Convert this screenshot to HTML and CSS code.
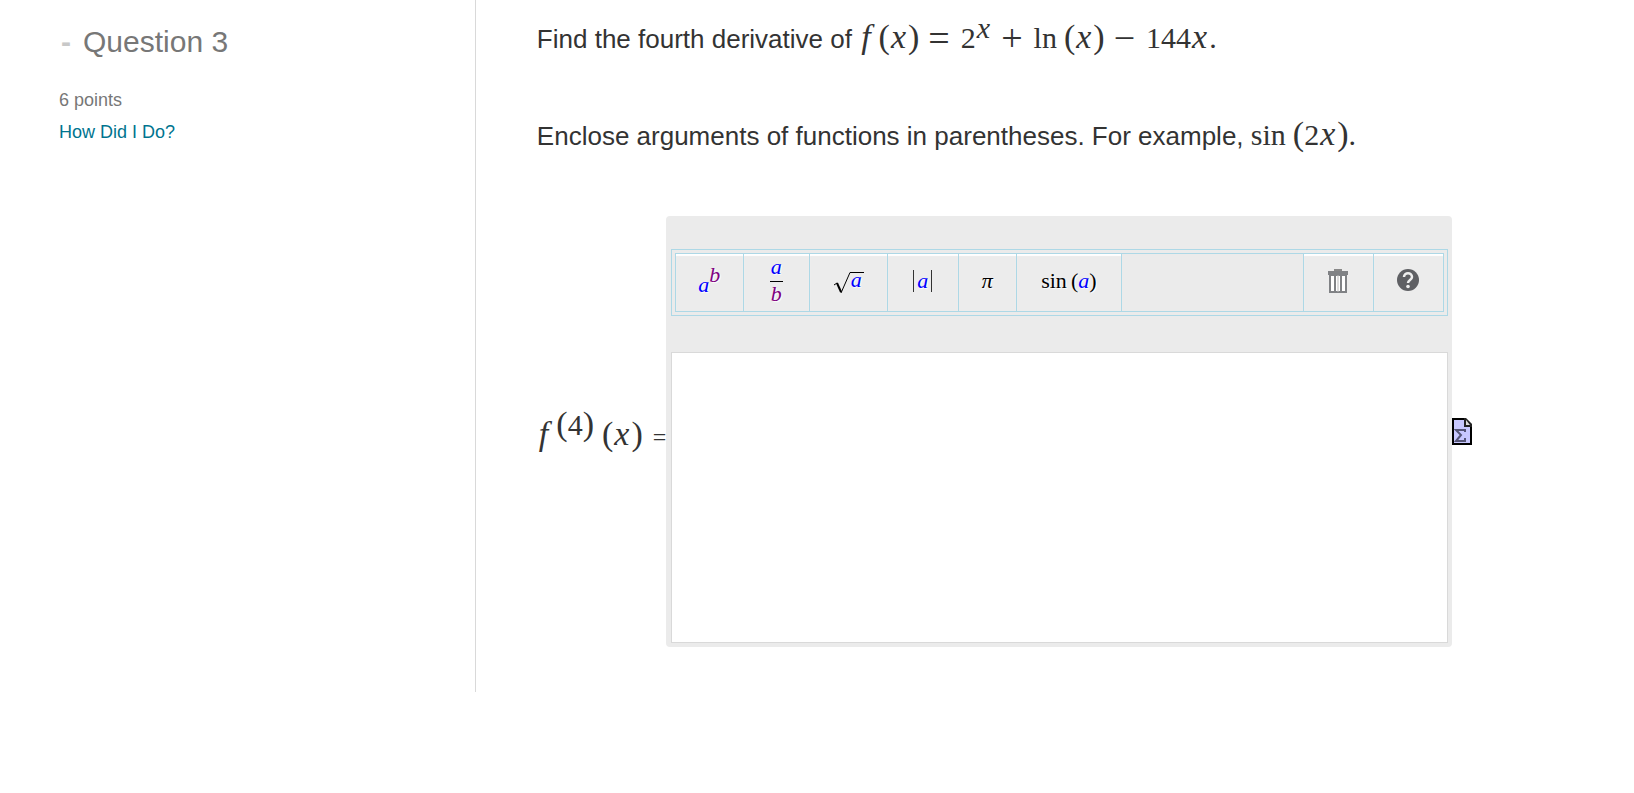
FILE: index.html
```html
<!DOCTYPE html>
<html lang="en">
<head>
    <meta charset="UTF-8">
    <meta name="viewport" content="width=device-width, initial-scale=1.0">
    <title>Question 3</title>
    <link rel="stylesheet" href="styles.css">
</head>
<body>
    <div class="question">
        <aside class="question-info">
            <h2><span class="dash">-</span>Question 3</h2>
            <p class="points">6 points</p>
            <a class="feedback-link" href="#">How Did I Do?</a>
        </aside>
        <main class="question-body">
            <p class="prompt">Find the fourth derivative of
                <span class="math"><i class="fn">f</i><span class="paren">(</span><i>x</i><span class="paren">)</span><span class="op">=</span>2<sup><i>x</i></sup><span class="op">+</span><span class="name">ln</span><span class="paren">(</span><i>x</i><span class="paren">)</span><span class="op">−</span>144<i>x</i>.</span>
            </p>
            <p class="prompt">Enclose arguments of functions in parentheses. For example,
                <span class="math"><span class="name">sin</span><span class="paren">(</span>2<i>x</i><span class="paren">)</span>.</span>
            </p>
            <div class="answer">
                <label class="math answer-label" for="answer"><i class="fn">f</i><sup><span class="paren">(</span>4<span class="paren">)</span></sup><span class="arg"><span class="paren">(</span><i>x</i><span class="paren">)</span></span><span class="equals">=</span></label>
                <div class="editor">
                    <div class="toolbar">
                        <div class="tools">
                            <button type="button" class="tool power" aria-label="Exponent"><i class="a">a</i><sup class="b"><i>b</i></sup></button>
                            <button type="button" class="tool fraction" aria-label="Fraction"><i class="a">a</i><span class="bar"></span><i class="b">b</i></button>
                            <button type="button" class="tool root" aria-label="Square root">
                                <svg width="31" height="24" viewBox="0 0 31 24" fill="none" stroke="#000"><path d="M1 14l3-2" stroke-width="1"/><path d="M4 12l4 9" stroke-width="2"/><path d="M8 22L17 1.5H31" stroke-width="1"/></svg>
                                <i class="a">a</i>
                            </button>
                            <button type="button" class="tool absolute" aria-label="Absolute value"><span class="abs"><i class="a">a</i></span></button>
                            <button type="button" class="tool pi" aria-label="Pi"><i>π</i></button>
                            <button type="button" class="tool sine" aria-label="Sine"><span class="name">sin</span><span class="paren">(</span><i class="a">a</i><span class="paren">)</span></button>
                            <span class="spacer"></span>
                            <button type="button" class="tool clear" aria-label="Clear">
                                <svg width="22" height="26" viewBox="0 0 22 26"><path d="M7 2h8" fill="none" stroke="#888" stroke-width="2"/><path d="M1 3h20v4H1z" fill="#808285"/><path d="M3 7h16v17H3z" fill="#fff" stroke="#808285" stroke-width="2"/><path d="M8 7v17M14 7v17" stroke="#808285" stroke-width="2"/><path d="M11 7v17" stroke="#bbb" stroke-width="1"/></svg>
                            </button>
                            <button type="button" class="tool help" aria-label="Help">
                                <svg width="24" height="26" viewBox="0 0 24 26"><circle cx="12" cy="12" r="11" fill="#5f6064"/><path d="M8 9c0-5 8-5 8 0 0 3-4 3-4 6" fill="none" stroke="#eee" stroke-width="2.500"/><circle cx="12" cy="18.500" r="1.800" fill="#eee"/></svg>
                            </button>
                        </div>
                    </div>
                    <textarea id="answer"></textarea>
                </div>
                <button type="button" class="preview" aria-label="Preview equation">
                    <svg width="20" height="27" viewBox="0 0 20 27"><path d="M1 1h12l6 6v19H1z" fill="#c8c8ff" stroke="#000" stroke-width="2"/><path d="M12 0h2l6 6v3h-8z" fill="#222"/><path d="M14 2l4 5h-4z" fill="#ddd"/><path d="M13 14v-2H4l5 5-5 6h9v-3" fill="none" stroke="#555577" stroke-width="2"/></svg>
                </button>
            </div>
        </main>
    </div>
</body>
</html>
```
FILE: styles.css
```css
body {
    margin: 0;
    background: #fff;
    color: #333;
    font-family: "Liberation Sans", Arial, sans-serif;
}
.question {
    display: flex;
}
.question-info {
    box-sizing: border-box;
    width: calc(29% + 2px);
    flex-shrink: 0;
    padding: 24px 20px 0 59px;
    border-right: 1px solid #d9d9d9;
    color: #777;
}
h2 {
    margin: 0;
    font-size: 30px;
    line-height: 36px;
    font-weight: 400;
}
.dash {
    display: inline-block;
    width: 24px;
    padding-left: 2px;
    box-sizing: border-box;
    color: #c8c8c8;
    font-weight: 700;
}
.points {
    margin: 24px 0 0;
    font-size: 18px;
    line-height: 32px;
}
.feedback-link {
    color: #00748f;
    font-size: 18px;
    line-height: 32px;
    text-decoration: none;
}
.question-body {
    flex: 1;
    min-width: 0;
    padding: 18px 20px 45px 61px;
}
.prompt {
    margin: 0 0 56px;
    font-size: 26px;
    line-height: 40px;
}
.math {
    display: inline-block;
    font-family: "Liberation Serif", serif;
    font-size: 30px;
    line-height: 40px;
    white-space: nowrap;
}
.math i,
.math .paren {
    font-size: 34px;
    line-height: 0;
}
.math i {
    margin: 0 2px 0 1px;
}
.math sup i {
    font-size: 30px;
}
.math .fn {
    margin: 0 8px 0 2px;
}
.math .op {
    margin: 0 11px 0 9px;
    font-size: 38px;
    line-height: 0;
    vertical-align: -3px;
}
.math .name {
    margin-right: 7px;
}
sup {
    position: relative;
    bottom: 10px;
    font-size: 1em;
    vertical-align: baseline;
    line-height: 0;
}
.answer {
    display: flex;
    align-items: center;
    margin-top: 60px;
}
.answer-label {
    flex: 0 0 129px;
    width: 129px;
    padding-top: 8px;
    line-height: 60px;
}
.arg {
    margin-left: 8px;
}
.equals {
    margin-left: 10px;
    font-size: 24px;
}
.editor {
    flex: 1;
    box-sizing: border-box;
    min-width: 0;
    max-width: 786px;
    padding: 33px 4px 4px 5px;
    border-radius: 4px;
    background: #ebebeb;
}
.toolbar {
    padding: 3px;
    border: 1px solid #add8e6;
}
.tools {
    display: flex;
    height: 57px;
    border: 1px solid #add8e6;
}
.tool {
    display: flex;
    box-sizing: border-box;
    flex-shrink: 0;
    align-items: center;
    justify-content: center;
    padding: 0 0 4px;
    border: 0;
    border-right: 1px solid #add8e6;
    border-radius: 0;
    background: #ececec;
    box-shadow: inset 0 2px 1px #fff;
    color: #000;
    font-family: "Liberation Serif", serif;
    font-size: 22px;
    line-height: 22px;
    text-shadow: 1px 1px 1px #fff;
    cursor: pointer;
}
.tool:hover {
    background: #f4f4f4;
}
.a {
    color: #00f;
}
.b {
    color: #800080;
}
.power {
    width: 68px;
    padding-top: 8px;
}
.fraction {
    width: 66px;
    flex-direction: column;
    padding-bottom: 4px;
}
.bar {
    width: 13px;
    height: 1px;
    margin: 3px 0 1px;
    background: #000;
}
.root {
    position: relative;
    width: 78px;
    padding-top: 4px;
}
.root .a {
    position: absolute;
    top: 15px;
    left: 41px;
}
.absolute {
    width: 71px;
}
.abs {
    padding: 0 3px;
    border: solid #333;
    border-width: 0 1px;
}
.pi {
    width: 58px;
}
.sine {
    width: 105px;
}
.tool .name {
    margin-right: 4px;
}
.spacer {
    flex: 1;
    border-right: 1px solid #add8e6;
}
.clear {
    width: 70px;
}
.help {
    width: 69px;
    border-right: 0;
}
textarea {
    display: block;
    box-sizing: border-box;
    width: 100%;
    height: 291px;
    margin-top: 36px;
    padding: 10px;
    border: 1px solid #d9d9d9;
    background: #fff;
    font-family: "Liberation Serif", serif;
    font-size: 22px;
    resize: none;
}
.preview {
    flex-shrink: 0;
    padding: 0;
    border: 0;
    background: none;
    line-height: 0;
    cursor: pointer;
}
```
